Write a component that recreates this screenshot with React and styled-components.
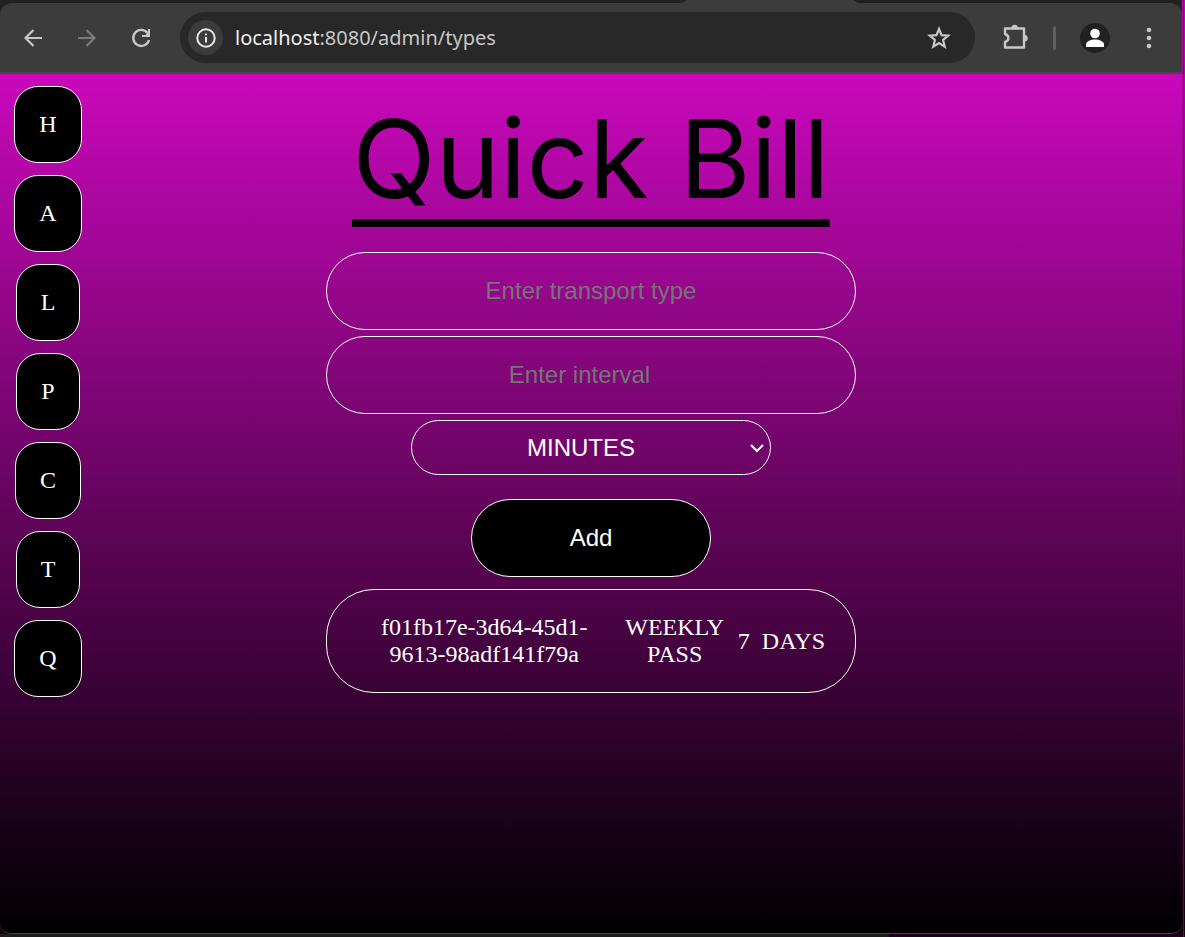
import React from "react";
import styled, { createGlobalStyle } from "styled-components";

const GlobalStyle = createGlobalStyle`
  *, *::before, *::after { box-sizing: border-box; }
  body { margin: 0; background: #1b1b1c; }
`;

const serif = `"Liberation Serif", "Times New Roman", serif`;
const sans = `"Liberation Sans", Arial, sans-serif`;

const Desktop = styled.div`
  display: flex;
  flex-direction: column;
  min-height: 100vh;
  padding: 0 3px 3px 0;
  background:
    linear-gradient(#3b2038, #3b2038) calc(100% - 1px) 0 / 1px 100% no-repeat,
    linear-gradient(90deg, #1d1d1d 75%, #200020 75%) 0 100% / 100% 3px no-repeat,
    linear-gradient(#b808ab, #16000f);
`;

const Window = styled.div`
  flex: 1;
  display: flex;
  flex-direction: column;
  overflow: hidden;
  background: #202221;
  border-radius: 0 0 10px 10px;
`;

const TabStrip = styled.div`
  display: flex;
  justify-content: flex-end;
  height: 3px;
  padding-right: 324px;
  background: #202221;
`;

const ActiveTab = styled.div`
  width: 176px;
  background: #3c3c3c;
  clip-path: polygon(5px 0, 171px 0, 100% 100%, 0 100%);
`;

const Toolbar = styled.header`
  display: flex;
  align-items: center;
  height: 71px;
  padding: 0 18px;
  background: #3c3c3c;
  border-bottom: 2px solid #474747;
  border-radius: 12px 12px 0 0;
`;

const ToolGroup = styled.div`
  display: flex;
  align-items: center;
  gap: 24px;
`;

const IconButton = styled.button`
  display: grid;
  place-items: center;
  width: 30px;
  height: 30px;
  padding: 0;
  border: 0;
  border-radius: 50%;
  color: ${(p) => p.$color || "#c7c7c7"};
  background: ${(p) => p.$fill || "transparent"};
`;

const AddressBar = styled.div`
  flex: 1;
  display: flex;
  align-items: center;
  height: 51px;
  margin: 0 24px;
  padding: 0 21px 0 8px;
  border-radius: 26px;
  background: #282828;
`;

const SiteInfo = styled(IconButton)`
  width: 35px;
  height: 35px;
`;

const Url = styled.span`
  flex: 1;
  margin-left: 12px;
  font: 20px/28px "Noto Sans", "Open Sans", sans-serif;
  color: #c7c7c7;
`;

const Host = styled.span`
  color: #f0f0f0;
`;

const Divider = styled.span`
  width: 3px;
  height: 24px;
  border-radius: 2px;
  background: #5f5f5f;
`;

const Page = styled.div`
  flex: 1;
  display: grid;
  grid-template-columns: 96px minmax(0, 1fr) 96px;
  align-items: start;
  background: linear-gradient(#c908bb, #000);
  border-bottom: 1px solid #444;
  border-radius: 0 0 10px 10px;
`;

const SideNav = styled.nav`
  display: flex;
  flex-direction: column;
  align-items: center;
  gap: 12px;
  padding-top: 12px;
`;

const NavLink = styled.a`
  padding: 24px;
  border: 1px solid #fff;
  border-radius: 24px;
  background: #000;
  color: #fff;
  font: 24px/27px ${serif};
  text-decoration: none;
`;

const Main = styled.main`
  display: flex;
  flex-direction: column;
  align-items: center;
  padding-top: 23px;
`;

const Title = styled.h1`
  margin: 0 0 25px;
  border-bottom: 8px solid #000;
  color: #000;
  font: 400 109px/122px Inter, sans-serif;
  white-space: nowrap;
`;

const Form = styled.form`
  display: flex;
  flex-direction: column;
  align-items: center;
  gap: 6px;
  width: 100%;
`;

const TextField = styled.input`
  width: 100%;
  max-width: 530px;
  height: 78px;
  padding: 0 24px;
  border: 1px solid #fff;
  border-radius: 39px;
  background: transparent;
  color: #fff;
  font: 24px/27px ${sans};
  text-align: center;
  &::placeholder { color: #757575; opacity: 1; }
  &[type="number"] { padding-right: 32px; }
`;

const SelectWrap = styled.div`
  display: grid;
  align-items: center;
  width: 100%;
  max-width: 360px;
  color: #fff;
  & > * { grid-area: 1 / 1; }
  & > svg { justify-self: end; margin-right: 6px; pointer-events: none; }
`;

const UnitSelect = styled.select`
  appearance: none;
  width: 100%;
  height: 55px;
  padding: 0 24px 0 4px;
  border: 1px solid #fff;
  border-radius: 28px;
  background: transparent;
  color: #fff;
  font: 24px/27px ${sans};
  text-align: center;
  text-align-last: center;
`;

const AddButton = styled.button`
  width: 240px;
  height: 78px;
  margin: 18px 0 12px;
  padding: 0 0 2px;
  border: 1px solid #fff;
  border-radius: 39px;
  background: #000;
  color: #fff;
  font: 24px/27px ${sans};
`;

const TypeList = styled.ul`
  width: 100%;
  max-width: 530px;
  margin: 0;
  padding: 0;
  list-style: none;
`;

const TypeRow = styled.li`
  display: flex;
  align-items: center;
  padding: 24px;
  border: 1px solid #fff;
  border-radius: 48px;
  color: #fff;
  font: 24px/27px ${serif};
  text-align: center;
`;

const TypeCell = styled.span`
  padding: 0 6px;
`;

const links = [
  ["H", "Home"], ["A", "Admin"], ["L", "Lines"], ["P", "Passes"],
  ["C", "Customers"], ["T", "Types"], ["Q", "Quit"],
];

const types = [
  { id: "f01fb17e-3d64-45d1-9613-98adf141f79a", name: "WEEKLY PASS", interval: 7, unit: "DAYS" },
];

const Stroke = ({ size = 24, width = 2, children }) => (
  <svg width={size} height={size} viewBox="0 0 24 24" fill="none" stroke="currentColor" strokeWidth={width} aria-hidden="true">
    {children}
  </svg>
);

export default function App() {
  return (
    <Desktop>
      <GlobalStyle />
      <Window>
        <TabStrip><ActiveTab /></TabStrip>
        <Toolbar>
          <ToolGroup>
            <IconButton aria-label="Back">
              <Stroke width={2.2}><path d="M21 12H4.500M12.500 4l-8 8 8 8" /></Stroke>
            </IconButton>
            <IconButton aria-label="Forward" $color="#7c7c7c">
              <Stroke width={2.2}><path d="M3 12h16.500M11.500 4l8 8-8 8" /></Stroke>
            </IconButton>
            <IconButton aria-label="Reload">
              <Stroke width={2.4}><path d="M18.600 7A8 8 0 1 0 20 14" /><path d="M21 3v8h-8v-2h3.500l2.500-3V3z" fill="currentColor" stroke="none" /></Stroke>
            </IconButton>
          </ToolGroup>
          <AddressBar>
            <SiteInfo aria-label="Site information" $fill="#3c3c3c" $color="#e8e8e8">
              <Stroke size={22} width={2.2}>
                <circle cx="12" cy="12" r="9.5" />
                <path d="M12 11v6M12 7v2" />
              </Stroke>
            </SiteInfo>
            <Url><Host>localhost</Host>:8080/admin/types</Url>
            <IconButton aria-label="Bookmark">
              <Stroke width={2.2}><path d="M12 3l2.500 6.200 6.700.5-5.100 4.300 1.600 6.600L12 17.100l-5.700 3.500 1.600-6.600L2.800 9.700l6.700-.5z" /></Stroke>
            </IconButton>
          </AddressBar>
          <ToolGroup>
            <IconButton aria-label="Extensions">
              <svg width="28" height="28" viewBox="0 0 28 28" fill="none" aria-hidden="true">
                <path d="M5 4.500h19v19H5v-5.500c4.500-1.500 4.500-6.500 0-8z" stroke="currentColor" strokeWidth="2.400" strokeLinejoin="round" />
                <path d="M11.500 4a3.200 3.200 0 0 1 6.400 0zM24.500 11a3.200 3.200 0 0 1 0 6.400z" fill="currentColor" />
              </svg>
            </IconButton>
            <Divider />
            <IconButton aria-label="Profile" $fill="#1f2221" $color="#fff">
              <svg width="30" height="30" viewBox="0 0 30 30" fill="currentColor" aria-hidden="true">
                <circle cx="15" cy="10.500" r="4.800" />
                <path d="M6 24v-2.500c0-3.500 5-5 9-5s9 1.500 9 5V24z" />
              </svg>
            </IconButton>
            <IconButton aria-label="Menu">
              <svg width="24" height="24" viewBox="0 0 24 24" fill="currentColor" aria-hidden="true">
                <circle cx="12" cy="4" r="2.300" /><circle cx="12" cy="12" r="2.300" /><circle cx="12" cy="20" r="2.300" />
              </svg>
            </IconButton>
          </ToolGroup>
        </Toolbar>
        <Page>
          <SideNav aria-label="Sections">
            {links.map(([letter, label]) => (
              <NavLink key={letter} href={`#${label.toLowerCase()}`}>{letter}</NavLink>
            ))}
          </SideNav>
          <Main>
            <Title>Quick Bill</Title>
            <Form onSubmit={(e) => e.preventDefault()}>
              <TextField aria-label="Transport type" placeholder="Enter transport type" />
              <TextField type="number" aria-label="Interval" placeholder="Enter interval" />
              <SelectWrap>
                <UnitSelect aria-label="Interval unit" defaultValue="MINUTES">
                  <option>MINUTES</option>
                  <option>HOURS</option>
                  <option>DAYS</option>
                </UnitSelect>
                <svg width="16" height="16" viewBox="0 0 16 16" fill="none" stroke="currentColor" strokeWidth="2" aria-hidden="true">
                  <path d="M2 5l6 6 6-6" />
                </svg>
              </SelectWrap>
              <AddButton type="submit">Add</AddButton>
            </Form>
            <TypeList>
              {types.map((t) => (
                <TypeRow key={t.id}>
                  <TypeCell>{t.id}</TypeCell>
                  <TypeCell>{t.name}</TypeCell>
                  <TypeCell>{t.interval}</TypeCell>
                  <TypeCell>{t.unit}</TypeCell>
                </TypeRow>
              ))}
            </TypeList>
          </Main>
        </Page>
      </Window>
    </Desktop>
  );
}
